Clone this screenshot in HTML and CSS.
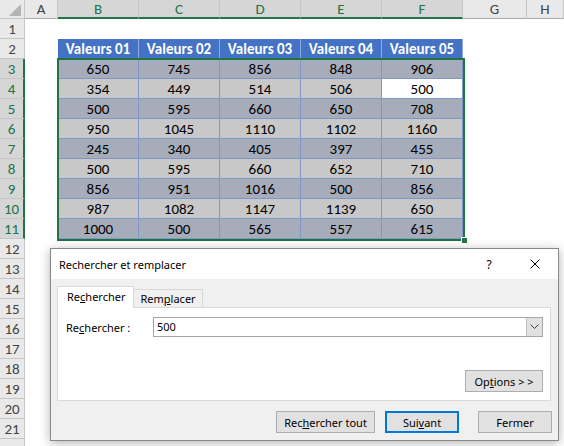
FILE: index.html
```html
<!DOCTYPE html>
<html lang="fr">
<head>
  <meta charset="UTF-8">
  <title>Rechercher et remplacer</title>
  <link rel="stylesheet" href="styles.css">
</head>
<body>

  <!-- Spreadsheet -->
  <div class="sheet">
    <div class="corner"></div>
    <div class="col-head">A</div>
    <div class="col-head sel">B</div>
    <div class="col-head sel">C</div>
    <div class="col-head sel">D</div>
    <div class="col-head sel">E</div>
    <div class="col-head sel">F</div>
    <div class="col-head">G</div>
    <div class="col-head">H</div>

    <div class="row-head">1</div>
    <div class="row-head">2</div>
    <div class="row-head sel">3</div>
    <div class="row-head sel">4</div>
    <div class="row-head sel">5</div>
    <div class="row-head sel">6</div>
    <div class="row-head sel">7</div>
    <div class="row-head sel">8</div>
    <div class="row-head sel">9</div>
    <div class="row-head sel">10</div>
    <div class="row-head sel">11</div>
    <div class="row-head">12</div>
    <div class="row-head">13</div>
    <div class="row-head">14</div>
    <div class="row-head">15</div>
    <div class="row-head">16</div>
    <div class="row-head">17</div>
    <div class="row-head">18</div>
    <div class="row-head">19</div>
    <div class="row-head">20</div>
    <div class="row-head">21</div>
    <div class="row-head"></div>

    <div class="tbl">
      <div class="tr head"><div>Valeurs 01</div><div>Valeurs 02</div><div>Valeurs 03</div><div>Valeurs 04</div><div>Valeurs 05</div></div>
      <div class="tr odd"><div>650</div><div>745</div><div>856</div><div>848</div><div>906</div></div>
      <div class="tr even"><div>354</div><div>449</div><div>514</div><div>506</div><div class="active">500</div></div>
      <div class="tr odd"><div>500</div><div>595</div><div>660</div><div>650</div><div>708</div></div>
      <div class="tr even"><div>950</div><div>1045</div><div>1110</div><div>1102</div><div>1160</div></div>
      <div class="tr odd"><div>245</div><div>340</div><div>405</div><div>397</div><div>455</div></div>
      <div class="tr even"><div>500</div><div>595</div><div>660</div><div>652</div><div>710</div></div>
      <div class="tr odd"><div>856</div><div>951</div><div>1016</div><div>500</div><div>856</div></div>
      <div class="tr even"><div>987</div><div>1082</div><div>1147</div><div>1139</div><div>650</div></div>
      <div class="tr odd"><div>1000</div><div>500</div><div>565</div><div>557</div><div>615</div></div>
    </div>
    <div class="selection"></div>
  </div>

  <!-- Find dialog -->
  <div class="dialog">
    <div class="title-bar">
      <span class="title">Rechercher et remplacer</span>
      <span class="title-btn">?</span>
      <span class="title-btn">
        <svg width="10" height="10" viewBox="0 0 10 10"><path d="M0.5 0.5 L9.5 9.5 M9.5 0.5 L0.5 9.5" stroke="#000" stroke-width="1" fill="none"/></svg>
      </span>
    </div>
    <div class="dialog-body">
      <div class="tabs">
        <div class="tab active">Re<u>c</u>hercher</div>
        <div class="tab">Rem<u>p</u>lacer</div>
      </div>
      <div class="panel">
        <div class="search-row">
          <label>Re<u>c</u>hercher :</label>
          <div class="combo">
            <span class="combo-text">500</span>
            <span class="combo-btn">
              <svg width="9" height="6" viewBox="0 0 9 6"><path d="M0.5 0.5 L4.5 4.5 L8.5 0.5" stroke="#404040" stroke-width="1" fill="none"/></svg>
            </span>
          </div>
        </div>
        <button class="btn options">Op<u>t</u>ions &gt; &gt;</button>
      </div>
      <div class="footer">
        <button class="btn find-all">Rec<u>h</u>ercher tout</button>
        <button class="btn next">Sui<u>v</u>ant</button>
        <button class="btn close">Fermer</button>
      </div>
    </div>
  </div>

</body>
</html>
```

FILE: styles.css
```css
body {
  margin: 0;
  width: 564px;
  height: 446px;
  overflow: hidden;
  position: relative;
  background-color: #fff;
  font-family: Carlito, Lato, sans-serif;
}

/* Spreadsheet grid */
.sheet {
  display: grid;
  grid-template-columns: 25px 33px repeat(5, 81px) 64px 1fr;
  grid-template-rows: 19px repeat(22, 20px);
}

.corner,
.col-head,
.row-head {
  box-sizing: border-box;
  background-color: #e9e9e9;
  color: #444;
  font-size: 15px;
  display: flex;
  align-items: center;
  justify-content: center;
  border-right: 1px solid #c6c6c6;
  border-bottom: 1px solid #c6c6c6;
}

.corner {
  position: relative;
}

.corner::after {
  content: "";
  position: absolute;
  right: 3px;
  bottom: 2px;
  border-left: 12px solid transparent;
  border-bottom: 12px solid #b4b4b4;
}

.col-head {
  border-bottom-color: #ababab;
}

.col-head.sel {
  background-color: #d6d6d6;
  color: #217346;
  border-bottom: 2px solid #217346;
}

.row-head {
  grid-column: 1;
}

.row-head.sel {
  background-color: #d6d6d6;
  color: #217346;
  border-right: 2px solid #217346;
}

/* Data table */
.tbl {
  grid-column: 3 / 8;
  grid-row: 3 / 13;
  display: grid;
  grid-template-columns: repeat(5, 1fr);
  grid-auto-rows: 20px;
  font-size: 15px;
  color: #000;
}

.tr {
  display: contents;
}

.tr > div {
  box-sizing: border-box;
  display: flex;
  align-items: center;
  justify-content: center;
  border-right: 1px solid #7f97c9;
  border-bottom: 1px solid #7f97c9;
}

.tr.head > div {
  background-color: #4472c4;
  color: #fff;
  font-weight: bold;
  border-color: #8ea9db;
}

.tr.odd > div {
  background-color: #a7acbb;
}

.tr.even > div {
  background-color: #c8c8c8;
}

.tr > div.active {
  background-color: #fff;
}

.selection {
  grid-column: 3 / 8;
  grid-row: 4 / 13;
  margin: -1px -2px -2px -1px;
  border: 2px solid #217346;
  position: relative;
  pointer-events: none;
}

.selection::after {
  content: "";
  position: absolute;
  right: -4px;
  bottom: -4px;
  width: 5px;
  height: 5px;
  background-color: #217346;
  outline: 1px solid #fff;
}

/* Dialog */
.dialog {
  position: absolute;
  left: 50px;
  top: 248px;
  width: 509px;
  height: 193px;
  box-sizing: border-box;
  border: 1px solid #888;
  background-color: #f0f0f0;
  box-shadow: 0 2px 10px rgba(0, 0, 0, 0.3);
  font-family: "Segoe UI", "Noto Sans", sans-serif;
  font-size: 11px;
  color: #000;
  display: flex;
  flex-direction: column;
}

.title-bar {
  height: 30px;
  flex-shrink: 0;
  background-color: #fff;
  display: flex;
  align-items: center;
  padding-left: 8px;
}

.title {
  flex: 1;
  font-size: 11px;
}

.title-btn {
  width: 46px;
  height: 30px;
  display: flex;
  align-items: center;
  justify-content: center;
  font-size: 12px;
}

.dialog-body {
  flex: 1;
  padding: 7px 7px 7px 6px;
  display: flex;
  flex-direction: column;
}

.tabs {
  display: flex;
  align-items: flex-end;
  height: 21px;
}

.tab {
  height: 18px;
  box-sizing: border-box;
  padding: 0 6px;
  line-height: 17px;
  background-color: #f0f0f0;
  border: 1px solid #d9d9d9;
  border-bottom: none;
  border-left: none;
}

.tab.active {
  height: 22px;
  margin-bottom: -1px;
  padding: 0 8px 0 9px;
  line-height: 20px;
  background-color: #fff;
  border-left: 1px solid #d9d9d9;
  position: relative;
}

.panel {
  height: 94px;
  box-sizing: border-box;
  background-color: #fff;
  border: 1px solid #d9d9d9;
  padding: 9px 7px 8px 8px;
  display: flex;
  flex-direction: column;
}

.search-row {
  display: flex;
  align-items: center;
}

.search-row label {
  width: 87px;
}

.combo {
  flex: 1;
  height: 20px;
  box-sizing: border-box;
  border: 1px solid #a6a6a6;
  display: flex;
}

.combo-text {
  flex: 1;
  padding-left: 3px;
  line-height: 18px;
}

.combo-btn {
  width: 15px;
  background-color: #e1e1e1;
  border-left: 1px solid #c4c4c4;
  display: flex;
  align-items: center;
  justify-content: center;
}

.btn {
  height: 22px;
  box-sizing: border-box;
  padding: 0;
  background-color: #e1e1e1;
  border: 1px solid #adadad;
  font-family: inherit;
  font-size: inherit;
  color: #000;
}

.options {
  align-self: flex-end;
  margin-top: auto;
  width: 78px;
}

.footer {
  display: flex;
  justify-content: flex-end;
  margin-top: 10px;
  margin-right: -1px;
}

.find-all {
  width: 99px;
}

.next {
  width: 74px;
  margin-left: 10px;
  border: 2px solid #0078d7;
}

.close {
  width: 74px;
  margin-left: 19px;
}
```
